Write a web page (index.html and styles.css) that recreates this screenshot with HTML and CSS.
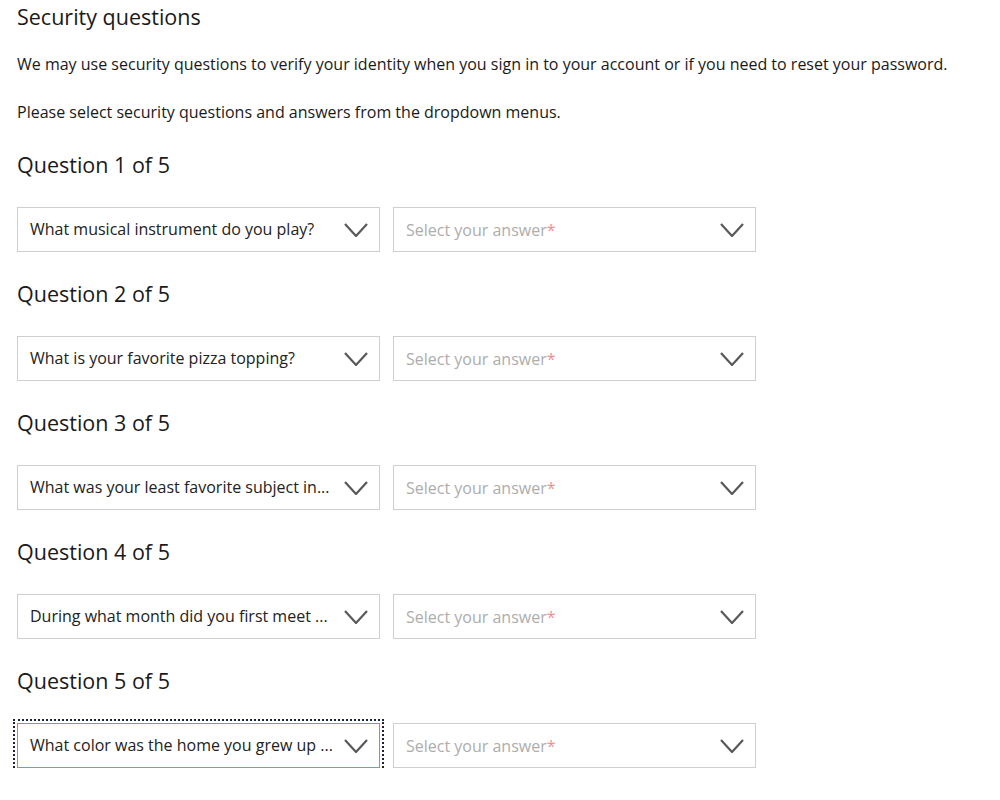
FILE: index.html
```html
<!DOCTYPE html>
<html lang="en">
<head>
  <meta charset="UTF-8" />
  <title>Security questions</title>
  <link rel="stylesheet" href="styles.css">
</head>
<body>
  <h1>Security questions</h1>
  <p class="intro">We may use security questions to verify your identity when you sign in to your account or if you need to reset your password.</p>
  <p class="intro">Please select security questions and answers from the dropdown menus.</p>

  <div class="question">
    <h2>Question 1 of 5</h2>
    <div class="row">
      <div class="dropdown"><span class="value">What musical instrument do you play?</span><svg class="chevron" viewBox="0 0 24 14"><path d="M1 1 L12 13 L23 1" /></svg></div>
      <div class="dropdown"><span class="placeholder">Select your answer<em>*</em></span><svg class="chevron" viewBox="0 0 24 14"><path d="M1 1 L12 13 L23 1" /></svg></div>
    </div>
  </div>

  <div class="question">
    <h2>Question 2 of 5</h2>
    <div class="row">
      <div class="dropdown"><span class="value">What is your favorite pizza topping?</span><svg class="chevron" viewBox="0 0 24 14"><path d="M1 1 L12 13 L23 1" /></svg></div>
      <div class="dropdown"><span class="placeholder">Select your answer<em>*</em></span><svg class="chevron" viewBox="0 0 24 14"><path d="M1 1 L12 13 L23 1" /></svg></div>
    </div>
  </div>

  <div class="question">
    <h2>Question 3 of 5</h2>
    <div class="row">
      <div class="dropdown"><span class="value">What was your least favorite subject in...</span><svg class="chevron" viewBox="0 0 24 14"><path d="M1 1 L12 13 L23 1" /></svg></div>
      <div class="dropdown"><span class="placeholder">Select your answer<em>*</em></span><svg class="chevron" viewBox="0 0 24 14"><path d="M1 1 L12 13 L23 1" /></svg></div>
    </div>
  </div>

  <div class="question">
    <h2>Question 4 of 5</h2>
    <div class="row">
      <div class="dropdown"><span class="value">During what month did you first meet ...</span><svg class="chevron" viewBox="0 0 24 14"><path d="M1 1 L12 13 L23 1" /></svg></div>
      <div class="dropdown"><span class="placeholder">Select your answer<em>*</em></span><svg class="chevron" viewBox="0 0 24 14"><path d="M1 1 L12 13 L23 1" /></svg></div>
    </div>
  </div>

  <div class="question">
    <h2>Question 5 of 5</h2>
    <div class="row">
      <div class="dropdown focused"><span class="value">What color was the home you grew up ...</span><svg class="chevron" viewBox="0 0 24 14"><path d="M1 1 L12 13 L23 1" /></svg></div>
      <div class="dropdown"><span class="placeholder">Select your answer<em>*</em></span><svg class="chevron" viewBox="0 0 24 14"><path d="M1 1 L12 13 L23 1" /></svg></div>
    </div>
  </div>
</body>
</html>
```

FILE: styles.css
```css
body {
  margin: 0;
  padding: 0 17px;
  font-family: 'Open Sans', 'Noto Sans', sans-serif;
  color: #1a1a1a;
  background-color: #fff;
}

h1 {
  margin: 0;
  font-size: 21.5px;
  font-weight: normal;
  line-height: 34px;
}

.intro {
  margin: 16px 0 0;
  font-size: 16px;
  line-height: 28px;
}

.intro + .intro {
  margin-top: 20px;
}

.question {
  padding-top: 24px;
}

.question + .question {
  padding-top: 27px;
}

h2 {
  margin: 0 0 27px;
  font-size: 21.5px;
  font-weight: normal;
  line-height: 30px;
}

.row {
  display: flex;
  gap: 13px;
}

.dropdown {
  box-sizing: border-box;
  width: 363px;
  height: 45px;
  border: 1px solid #cfcfcf;
  display: flex;
  align-items: center;
  padding: 0 11px 0 12px;
  gap: 8px;
  font-size: 16px;
}

.dropdown .value {
  flex: 1;
  min-width: 0;
  white-space: nowrap;
  color: #222;
  margin-top: -2px;
}

.dropdown .placeholder {
  flex: 1;
  color: #adadad;
  margin-top: 1px;
}

.dropdown em {
  font-style: normal;
  color: #ef8f8f;
}

.chevron {
  width: 24px;
  height: 14px;
  flex: none;
  fill: none;
  stroke: #595959;
  stroke-width: 2.2;
}

.dropdown.focused {
  border-color: #6a9be0;
  outline: 2px dotted #1b2040;
  outline-offset: 2px;
}
```
